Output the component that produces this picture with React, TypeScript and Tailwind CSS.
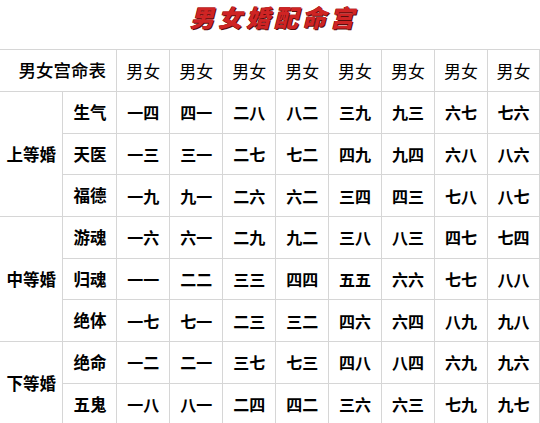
const cols = 8;

const groups = [
    {
        label: "上等婚",
        rows: [
            { name: "生气", cells: ["一四", "四一", "二八", "八二", "三九", "九三", "六七", "七六"] },
            { name: "天医", cells: ["一三", "三一", "二七", "七二", "四九", "九四", "六八", "八六"] },
            { name: "福德", cells: ["一九", "九一", "二六", "六二", "三四", "四三", "七八", "八七"] }
        ]
    },
    {
        label: "中等婚",
        rows: [
            { name: "游魂", cells: ["一六", "六一", "二九", "九二", "三八", "八三", "四七", "七四"] },
            { name: "归魂", cells: ["一一", "二二", "三三", "四四", "五五", "六六", "七七", "八八"] },
            { name: "绝体", cells: ["一七", "七一", "二三", "三二", "四六", "六四", "八九", "九八"] }
        ]
    },
    {
        label: "下等婚",
        rows: [
            { name: "绝命", cells: ["一二", "二一", "三七", "七三", "四八", "八四", "六九", "九六"] },
            { name: "五鬼", cells: ["一八", "八一", "二四", "四二", "三六", "六三", "七九", "九七"] }
        ]
    }
];

const font = { fontFamily: '"Noto Sans CJK SC", "Noto Sans", sans-serif' };

export default function App() {
    return (
        <div className="h-[423px] w-[540px] overflow-hidden bg-white text-black" style={font}>
            <div className="flex h-[49px] justify-center pt-[2px]">
                <h1
                    className="pl-[8px] text-[24px] font-black italic leading-[30px] tracking-[4px] text-[#cf2424]"
                    style={{ textShadow: "1px 1px 0 #5a0d0d, -0.5px -0.5px 0 #7a1010" }}
                >
                    男女婚配命宫
                </h1>
            </div>

            <table className="table-fixed border-collapse text-[16px]">
                <colgroup>
                    <col className="w-[63px]" />
                    <col className="w-[54px]" />
                    {Array.from({ length: cols }).map((_, i) => (
                        <col key={i} className={i === cols - 1 ? "w-[52px]" : "w-[53px]"} />
                    ))}
                </colgroup>
                <thead>
                    <tr className="h-[42px]">
                        <th colSpan={2} className="border-y border-r border-[#d6d6d6] pl-[8px] text-[17.5px] font-medium">
                            男女宫命表
                        </th>
                        {Array.from({ length: cols }).map((_, i) => (
                            <th key={i} className="border border-[#d6d6d6] text-[17px] font-normal">
                                男女
                            </th>
                        ))}
                    </tr>
                </thead>
                <tbody>
                    {groups.map((group) =>
                        group.rows.map((row, ri) => (
                            <tr key={row.name} className="h-[41.7px]">
                                {ri === 0 && (
                                    <td
                                        rowSpan={group.rows.length}
                                        className="border-y border-r border-[#d6d6d6] text-center text-[16.5px] font-bold"
                                    >
                                        {group.label}
                                    </td>
                                )}
                                <td className="border border-[#d6d6d6] text-center text-[16.5px] font-bold">{row.name}</td>
                                {row.cells.map((c, ci) => (
                                    <td key={ci} className="border border-[#d6d6d6] text-center font-bold">
                                        {c}
                                    </td>
                                ))}
                            </tr>
                        ))
                    )}
                </tbody>
            </table>
        </div>
    );
}
